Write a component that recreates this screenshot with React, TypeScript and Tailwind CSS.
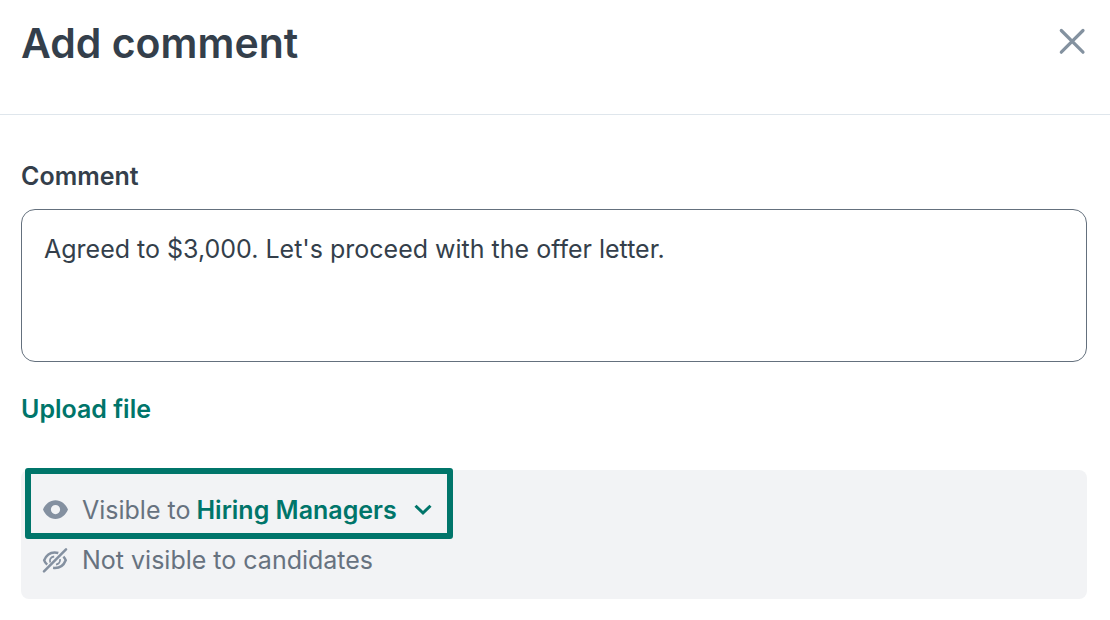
import { useState } from "react";

function CloseIcon() {
  return (
    <svg viewBox="0 0 28 28" className="size-7" fill="none" stroke="currentColor" strokeWidth="3.2" strokeLinecap="round" aria-hidden="true">
      <path d="M3.300 3.500 25 25.200M25 3.500 3.300 25.200" />
    </svg>
  );
}

function EyeIcon() {
  return (
    <svg viewBox="0 0 26 26" className="size-6.5 shrink-0 text-[#8490a0]" fill="currentColor" fillRule="evenodd" aria-hidden="true">
      <path d="M13.5 3.2C8 3.2 3.200 6.900 1 12.600c2.200 5.700 7 9.400 12.500 9.400S23.800 18.300 26 12.600C23.800 6.900 19 3.200 13.500 3.200Zm0 4.800a4.600 4.600 0 1 1 0 9.200 4.600 4.600 0 0 1 0-9.200Z" />
    </svg>
  );
}

function EyeOffIcon() {
  return (
    <svg viewBox="0 0 26 26" className="size-6.5 shrink-0 text-[#8490a0]" fill="none" stroke="currentColor" strokeWidth="2.5" aria-hidden="true">
      <path d="M2 24.300 24 2.300" strokeLinecap="round" />
      <path d="M5.200 17.600C3.900 16.500 2.800 15 2.200 13.300 4.100 8.500 8 5.400 12.600 5.400c1.300 0 2.500.2 3.700.6" />
      <path d="M8.200 15.500c-1.100-2.900.7-5.700 4-6" strokeWidth="1.800" />
      <path d="M21.400 9.600c1 1 1.800 2.200 2.300 3.600-1.900 4.800-6 7.800-10.700 7.800-.7 0-1.300-.1-1.900-.2" />
      <path d="M18 12.200c.4 2.600-1.300 4.900-4 5.400" strokeWidth="1.800" />
    </svg>
  );
}

function ChevronIcon() {
  return (
    <svg viewBox="0 0 18 12" className="pointer-events-none absolute top-3 right-px h-3 w-4.5 text-[#00756a]" fill="none" stroke="currentColor" strokeWidth="3" aria-hidden="true">
      <path d="m1.500 1.700 7.500 7.300 7.500-7.300" />
    </svg>
  );
}

export default function App() {
  const [comment, setComment] = useState("Agreed to $3,000. Let's proceed with the offer letter.");

  return (
    <main className="bg-white font-['Inter',sans-serif] text-[25px] leading-9 text-[#343f4b]">
      <header className="flex items-start justify-between border-b border-[#dfe6ec] pt-[15px] pr-[22px] pb-[43px] pl-[21px]">
        <h1 className="text-[41px] leading-14 font-semibold">Add comment</h1>
        <button type="button" aria-label="Close" className="mt-3 mr-0.5 text-[#8492a0]">
          <CloseIcon />
        </button>
      </header>

      <form className="flex flex-col items-start pt-[43px] pr-[23px] pl-[21px]">
        <label htmlFor="comment" className="font-semibold">Comment</label>
        <textarea
          id="comment"
          value={comment}
          onChange={(e) => setComment(e.target.value)}
          className="mt-[15px] block h-[153px] w-full resize-none rounded-[14px] border border-[#64707d] px-[22px] py-[21px] outline-none"
        />
        <button type="button" className="mt-[29px] font-semibold text-[#00756a]">Upload file</button>

        <section className="mt-[43px] w-full rounded-lg bg-[#f2f3f5] px-[21px] pt-[22px] pb-[21px] text-[#67727f]">
          <div className="relative flex w-fit items-center gap-3.5">
            <div className="pointer-events-none absolute -top-6 -right-5 -bottom-[11px] -left-[17px] rounded-[3px] border-6 border-[#00756a]" />
            <EyeIcon />
            <div className="flex gap-1.5">
              <label htmlFor="audience">Visible to</label>
              <div className="relative">
                <select id="audience" className="field-sizing-content appearance-none bg-transparent pr-9 font-semibold text-[#00756a] outline-none">
                  <option>Hiring Managers</option>
                </select>
                <ChevronIcon />
              </div>
            </div>
          </div>
          <div className="mt-3.5 flex items-center gap-3.5">
            <EyeOffIcon />
            <p>Not visible to candidates</p>
          </div>
        </section>
      </form>
    </main>
  );
}
